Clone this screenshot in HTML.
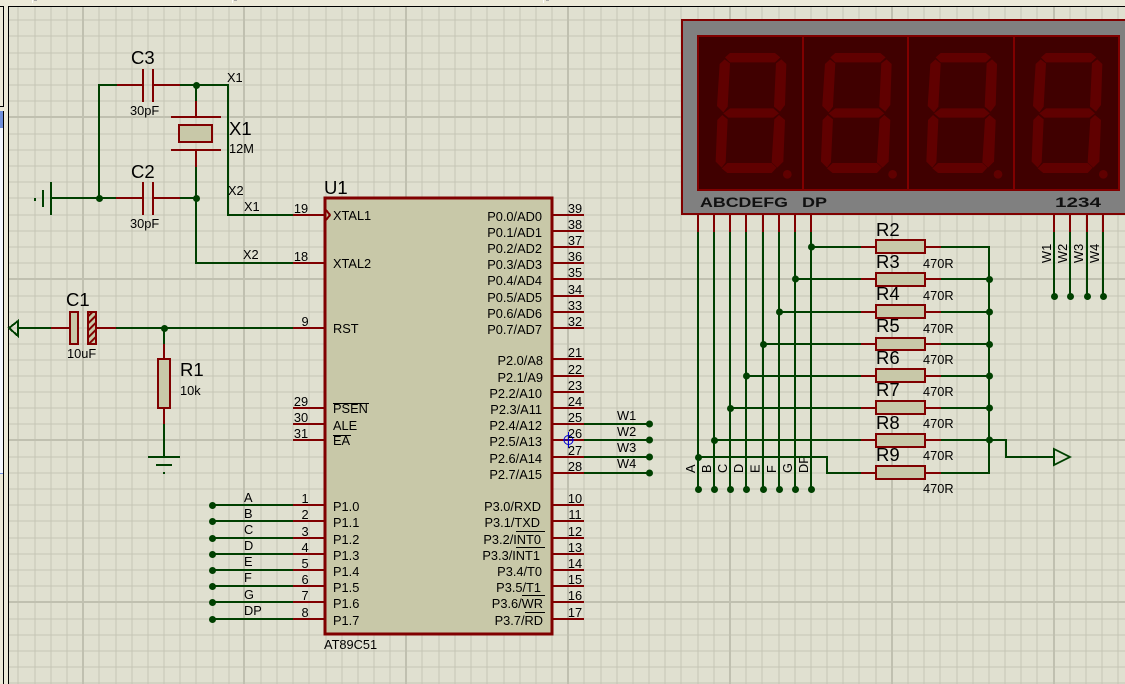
<!DOCTYPE html>
<html><head><meta charset="utf-8"><title>AT89C51 schematic</title>
<style>
html,body{margin:0;padding:0;width:1125px;height:684px;overflow:hidden;background:#ECE9D8}
svg{display:block;position:absolute;left:0;top:0}
text{font-family:"Liberation Sans",sans-serif;fill:#000;stroke:none}
.l{font-size:18.5px}
.s{font-size:12.8px}
.n{font-size:12.8px}
.e{text-anchor:end}
.m{text-anchor:middle}
.g path,.g rect,.g line,.g polygon,.g polyline,.g circle{shape-rendering:crispEdges}
.d{font-size:14px;font-weight:bold;fill:#111}
</style></head><body>
<svg width="1125" height="684" viewBox="0 0 1125 684" xmlns="http://www.w3.org/2000/svg">
<defs>
<pattern id="hatch" width="5" height="5" patternUnits="userSpaceOnUse" patternTransform="rotate(-45)"><rect width="5" height="5" fill="#C8C8A8"/><rect width="5" height="2" fill="#800000"/></pattern>
<g id="digit" fill="#600000">
<polygon points="165,172 180,159 315,159 331,172 315,187 180,187"/>
<polygon points="334,178 349,192 345,315 330,335 312,320 318,190"/>
<polygon points="164,178 149,192 141,318 160,337 173,320 180,190"/>
<polygon points="160,340 180,325 310,325 327,340 310,353 175,353"/>
<polygon points="157,345 173,358 167,487 155,503 137,485 142,360"/>
<polygon points="327,345 345,360 340,485 322,503 305,487 313,358"/>
<polygon points="155,505 172,489 305,489 320,503 305,519 172,519"/>
<circle cx="352" cy="523" r="13"/>
</g>
</defs>

<!-- window chrome -->
<rect x="0" y="0" width="1125" height="684" fill="#ECE9D8"/>
<rect x="9" y="7" width="1116" height="677" fill="#E0E0D0"/>
<rect x="0" y="111" width="3" height="17" fill="#6F8FDC"/>
<rect x="0" y="128" width="3" height="345" fill="#F4F7FE"/>
<rect x="0" y="473" width="3" height="1" fill="#6F8FDC"/>
<rect x="32" y="0" width="1" height="3" fill="#fff"/>
<rect x="34" y="0" width="3" height="1" fill="#aaa"/>
<rect x="232" y="0" width="1" height="3" fill="#fff"/>
<rect x="234" y="0" width="3" height="1" fill="#aaa"/>
<rect x="543" y="0" width="1" height="3" fill="#fff"/>
<rect x="546" y="0" width="3" height="1" fill="#aaa"/>

<g class="g">
<!-- grid minor -->
<path fill="none" stroke="#C6C6B6" stroke-width="1" d="M18 7V684M35 7V684M51 7V684M67 7V684M99 7V684M116 7V684M132 7V684M148 7V684M164 7V684M180 7V684M196 7V684M213 7V684M229 7V684M261 7V684M277 7V684M293 7V684M309 7V684M326 7V684M342 7V684M358 7V684M374 7V684M390 7V684M422 7V684M439 7V684M455 7V684M471 7V684M487 7V684M504 7V684M520 7V684M536 7V684M552 7V684M584 7V684M601 7V684M617 7V684M633 7V684M649 7V684M665 7V684M681 7V684M698 7V684M714 7V684M746 7V684M762 7V684M779 7V684M795 7V684M811 7V684M827 7V684M843 7V684M859 7V684M876 7V684M908 7V684M924 7V684M940 7V684M957 7V684M973 7V684M989 7V684M1005 7V684M1021 7V684M1037 7V684M1070 7V684M1086 7V684M1102 7V684M1118 7V684
M9 20H1125M9 36H1125M9 53H1125M9 69H1125M9 85H1125M9 101H1125M9 134H1125M9 150H1125M9 166H1125M9 182H1125M9 198H1125M9 215H1125M9 231H1125M9 247H1125M9 263H1125M9 296H1125M9 312H1125M9 328H1125M9 344H1125M9 360H1125M9 376H1125M9 392H1125M9 408H1125M9 424H1125M9 457H1125M9 473H1125M9 489H1125M9 505H1125M9 521H1125M9 538H1125M9 554H1125M9 570H1125M9 586H1125M9 619H1125M9 635H1125M9 651H1125M9 667H1125M9 683H1125"/>
<path fill="none" stroke="#C0C0B0" stroke-width="2" d="M83 7V684M244 7V684M406 7V684M568 7V684M730 7V684M892 7V684M1054 7V684M9 117H1125M9 279H1125M9 440H1125M9 602H1125"/>
<!-- frame -->
<path fill="none" stroke="#000" stroke-width="1" d="M8.5 684V6.5H1125"/>
<path fill="none" stroke="#000" stroke-width="1" d="M0 6.5H3.5V106.5H0"/>
<path fill="none" stroke="#000" stroke-width="1" d="M3.5 111V684"/>

<!-- display -->
<rect x="682" y="20" width="460" height="194" fill="#808080" stroke="#800000" stroke-width="2"/>
<rect x="698" y="36" width="421" height="154" fill="#400000" stroke="#800000" stroke-width="2"/>
<path fill="none" stroke="#800000" stroke-width="2" d="M803 36V190M908 36V190M1014 36V190"/>
<g shape-rendering="auto">
<use href="#digit" transform="translate(670 0) scale(.3333)"/>
<use href="#digit" transform="translate(775.3 0) scale(.3333)"/>
<use href="#digit" transform="translate(880.7 0) scale(.3333)"/>
<use href="#digit" transform="translate(986 0) scale(.3333)"/>
</g>
</g>
<text class="d" x="700" y="207" textLength="88" lengthAdjust="spacingAndGlyphs">ABCDEFG</text>
<text class="d" x="802" y="207" textLength="25" lengthAdjust="spacingAndGlyphs">DP</text>
<text class="d" x="1055" y="207" textLength="46" lengthAdjust="spacingAndGlyphs">1234</text>

<!-- rotated labels under wires -->
<g class="s">
<text class="s" transform="translate(695 473) rotate(-90)">A</text>
<text class="s" transform="translate(711 473) rotate(-90)">B</text>
<text class="s" transform="translate(727 473) rotate(-90)">C</text>
<text class="s" transform="translate(743 473) rotate(-90)">D</text>
<text class="s" transform="translate(759.500 473) rotate(-90)">E</text>
<text class="s" transform="translate(776 473) rotate(-90)">F</text>
<text class="s" transform="translate(792 473) rotate(-90)">G</text>
<text class="s" transform="translate(808 473) rotate(-90)">DP</text>
<text class="s" transform="translate(1051 263) rotate(-90)">W1</text>
<text class="s" transform="translate(1067 263) rotate(-90)">W2</text>
<text class="s" transform="translate(1083 263) rotate(-90)">W3</text>
<text class="s" transform="translate(1099 263) rotate(-90)">W4</text>
</g>

<g class="g" fill="none">
<!-- chip -->
<rect x="325" y="198" width="227" height="436" fill="#C8C8A8" stroke="#800000" stroke-width="3"/>

<!-- green wires -->
<path stroke="#004000" stroke-width="2" d="
M117 85H99V198M180 85H228V215H293M196 85V101M196 167V263H293M51 198H116M180 198H196
M19 328H51M116 328H293M164 328V344M164 424V457
M212 505H293M212 521H293M212 538H293M212 554H293M212 570H293M212 586H293M212 602H293M212 619H293
M584 424H649M584 440H649M584 457H649M584 473H649
M698 232V489M714 232V489M730 232V489M746 232V489M763 232V489M779 232V489M795 232V489M811 232V489
M1054 232V296M1070 232V296M1087 232V296M1103 232V296
M811 247H861M795 279H861M779 312H861M763 344H861M746 376H861M730 408H861M714 440H861
M698 457H827V473H861
M941 247H989V473H941M941 279H989M941 312H989M941 344H989M941 376H989M941 408H989M941 440H1006V457H1054"/>
<polygon points="1054,449 1054,465 1070,457" stroke="#004000" stroke-width="2" shape-rendering="auto"/>
<polygon points="9,328 18,321 18,336" stroke="#004000" stroke-width="2" shape-rendering="auto"/>

<!-- ground symbols -->
<path stroke="#004000" stroke-width="2" d="M51 182V215M43 190V207M148 457H180M156 465H172"/>
<rect x="34" y="198" width="2" height="3" fill="#004000"/>
<rect x="163" y="472" width="2" height="2" fill="#004000"/>

<!-- red pins -->
<path stroke="#800000" stroke-width="2" d="
M117 85H143M153 85H180M143 69V102M153 69V102
M116 198H143M153 198H180M143 182V215M153 182V215
M196 101V117M196 150V167M171 117H221M171 150H221
M51 328H70M96 328H116M164 344V359M164 408V424
M293 215H325M293 263H325M293 328H325M293 408H325M293 424H325M293 440H325
M293 505H325M293 521H325M293 538H325M293 554H325M293 570H325M293 586H325M293 602H325M293 619H325
M552 215H584M552 231H584M552 247H584M552 263H584M552 279H584M552 296H584M552 312H584M552 328H584
M552 359H584M552 376H584M552 392H584M552 408H584M552 424H584M552 440H584M552 457H584M552 473H584
M552 505H584M552 521H584M552 538H584M552 554H584M552 570H584M552 586H584M552 602H584M552 619H584
M698 214V232M714 214V232M730 214V232M746 214V232M763 214V232M779 214V232M795 214V232M811 214V232
M1054 214V232M1070 214V232M1087 214V232M1103 214V232
M861 247H876M861 279H876M861 312H876M861 344H876M861 376H876M861 408H876M861 440H876M861 473H876
M925 247H941M925 279H941M925 312H941M925 344H941M925 376H941M925 408H941M925 440H941M925 473H941"/>
<polyline points="326,210 330,215 326,220" stroke="#800000" stroke-width="2" shape-rendering="auto"/>

<!-- parts -->
<rect x="179" y="125" width="33" height="17" fill="#C8C8A8" stroke="#800000" stroke-width="2"/>
<rect x="70" y="312" width="8" height="32" fill="#C8C8A8" stroke="#800000" stroke-width="2"/>
<rect x="88" y="312" width="8" height="32" fill="url(#hatch)" stroke="#800000" stroke-width="2"/>
<rect x="158" y="359" width="12" height="49" fill="#C8C8A8" stroke="#800000" stroke-width="2"/>
<g fill="#C8C8A8" stroke="#800000" stroke-width="2">
<rect x="876" y="240" width="49" height="13"/>
<rect x="876" y="273" width="49" height="13"/>
<rect x="876" y="305" width="49" height="13"/>
<rect x="876" y="338" width="49" height="12"/>
<rect x="876" y="369" width="49" height="13"/>
<rect x="876" y="401" width="49" height="13"/>
<rect x="876" y="434" width="49" height="13"/>
<rect x="876" y="466" width="49" height="13"/>
</g>
</g>

<!-- junctions -->
<g fill="#004000">
<circle cx="196.500" cy="85.500" r="3.500"/><circle cx="99.500" cy="198.500" r="3.500"/><circle cx="196.500" cy="198.500" r="3.500"/><circle cx="164.500" cy="328.500" r="3.500"/>
<circle cx="212.500" cy="505.500" r="3.500"/><circle cx="212.500" cy="521.500" r="3.500"/><circle cx="212.500" cy="538.500" r="3.500"/><circle cx="212.500" cy="554.500" r="3.500"/><circle cx="212.500" cy="570.500" r="3.500"/><circle cx="212.500" cy="586.500" r="3.500"/><circle cx="212.500" cy="602.500" r="3.500"/><circle cx="212.500" cy="619.500" r="3.500"/>
<circle cx="649.500" cy="424" r="3.500"/><circle cx="649.500" cy="440" r="3.500"/><circle cx="649.500" cy="457" r="3.500"/><circle cx="649.500" cy="473" r="3.500"/>
<circle cx="698.500" cy="489.500" r="3.500"/><circle cx="714.500" cy="489.500" r="3.500"/><circle cx="730.500" cy="489.500" r="3.500"/><circle cx="746.500" cy="489.500" r="3.500"/><circle cx="763.500" cy="489.500" r="3.500"/><circle cx="779.500" cy="489.500" r="3.500"/><circle cx="795.500" cy="489.500" r="3.500"/><circle cx="811.500" cy="489.500" r="3.500"/>
<circle cx="1054.500" cy="296.500" r="3.500"/><circle cx="1070.500" cy="296.500" r="3.500"/><circle cx="1087.500" cy="296.500" r="3.500"/><circle cx="1103.500" cy="296.500" r="3.500"/>
<circle cx="811.500" cy="247" r="3.500"/><circle cx="795.500" cy="279" r="3.500"/><circle cx="779.500" cy="312" r="3.500"/><circle cx="763.500" cy="344.500" r="3.500"/><circle cx="746.500" cy="376" r="3.500"/><circle cx="730.500" cy="408.500" r="3.500"/><circle cx="714.500" cy="440.500" r="3.500"/><circle cx="698.500" cy="457.500" r="3.500"/>
<circle cx="989.500" cy="279.500" r="3.500"/><circle cx="989.500" cy="312" r="3.500"/><circle cx="989.500" cy="344.500" r="3.500"/><circle cx="989.500" cy="376" r="3.500"/><circle cx="989.500" cy="408" r="3.500"/><circle cx="989.500" cy="440" r="3.500"/>
</g>

<!-- crosshair -->
<g fill="none" stroke="#0000D0" stroke-width="1"><circle cx="568.500" cy="440" r="4.500"/><path d="M568.500 432V448M563 440H574"/></g>

<!-- big labels -->
<text class="l" x="131" y="64">C3</text>
<text class="l" x="131" y="178">C2</text>
<text class="l" x="229" y="135">X1</text>
<text class="l" x="324" y="194">U1</text>
<text class="l" x="66" y="306">C1</text>
<text class="l" x="180" y="376">R1</text>
<text class="l" x="876" y="236">R2</text>
<text class="l" x="876" y="268">R3</text>
<text class="l" x="876" y="300">R4</text>
<text class="l" x="876" y="332">R5</text>
<text class="l" x="876" y="364">R6</text>
<text class="l" x="876" y="396">R7</text>
<text class="l" x="876" y="429">R8</text>
<text class="l" x="876" y="461">R9</text>

<!-- small labels -->
<g class="s">
<text class="s" x="130" y="115">30pF</text>
<text class="s" x="130" y="228">30pF</text>
<text class="s" x="229" y="153">12M</text>
<text class="s" x="67" y="358">10uF</text>
<text class="s" x="180" y="395">10k</text>
<text class="s" x="227" y="82">X1</text>
<text class="s" x="228" y="195">X2</text>
<text class="s" x="244" y="211">X1</text>
<text class="s" x="243" y="259">X2</text>
<text class="s" x="324" y="649">AT89C51</text>
<text class="s" x="333" y="220">XTAL1</text>
<text class="s" x="333" y="268">XTAL2</text>
<text class="s" x="333" y="333">RST</text>
<text class="s" x="333" y="413">PSEN</text>
<text class="s" x="333" y="430">ALE</text>
<text class="s" x="333" y="445">EA</text>
<text class="s" x="333" y="511">P1.0</text>
<text class="s" x="333" y="527">P1.1</text>
<text class="s" x="333" y="544">P1.2</text>
<text class="s" x="333" y="560">P1.3</text>
<text class="s" x="333" y="576">P1.4</text>
<text class="s" x="333" y="592">P1.5</text>
<text class="s" x="333" y="608">P1.6</text>
<text class="s" x="333" y="625">P1.7</text>
<text class="s" x="244" y="502">A</text>
<text class="s" x="244" y="518">B</text>
<text class="s" x="244" y="534">C</text>
<text class="s" x="244" y="550">D</text>
<text class="s" x="244" y="566">E</text>
<text class="s" x="244" y="582">F</text>
<text class="s" x="244" y="599">G</text>
<text class="s" x="244" y="615">DP</text>
<text class="s" x="617" y="420">W1</text>
<text class="s" x="617" y="436">W2</text>
<text class="s" x="617" y="452">W3</text>
<text class="s" x="617" y="468">W4</text>
<text class="s" x="923" y="268">470R</text>
<text class="s" x="923" y="300">470R</text>
<text class="s" x="923" y="333">470R</text>
<text class="s" x="923" y="364">470R</text>
<text class="s" x="923" y="396">470R</text>
<text class="s" x="923" y="428">470R</text>
<text class="s" x="923" y="460">470R</text>
<text class="s" x="923" y="493">470R</text>
</g>
<g>
<text class="s e" x="542" y="221">P0.0/AD0</text>
<text class="s e" x="542" y="237">P0.1/AD1</text>
<text class="s e" x="542" y="253">P0.2/AD2</text>
<text class="s e" x="542" y="269">P0.3/AD3</text>
<text class="s e" x="542" y="285">P0.4/AD4</text>
<text class="s e" x="542" y="302">P0.5/AD5</text>
<text class="s e" x="542" y="318">P0.6/AD6</text>
<text class="s e" x="542" y="334">P0.7/AD7</text>
<text class="s e" x="543" y="365">P2.0/A8</text>
<text class="s e" x="543" y="382">P2.1/A9</text>
<text class="s e" x="542" y="398">P2.2/A10</text>
<text class="s e" x="542" y="414">P2.3/A11</text>
<text class="s e" x="542" y="430">P2.4/A12</text>
<text class="s e" x="542" y="446">P2.5/A13</text>
<text class="s e" x="542" y="463">P2.6/A14</text>
<text class="s e" x="542" y="479">P2.7/A15</text>
<text class="s e" x="541" y="511">P3.0/RXD</text>
<text class="s e" x="540" y="527">P3.1/TXD</text>
<text class="s e" x="541" y="544">P3.2/INT0</text>
<text class="s e" x="540" y="560">P3.3/INT1</text>
<text class="s e" x="542" y="576">P3.4/T0</text>
<text class="s e" x="541" y="592">P3.5/T1</text>
<text class="s e" x="543" y="608">P3.6/WR</text>
<text class="s e" x="543" y="625">P3.7/RD</text>
</g>
<path shape-rendering="crispEdges" fill="none" stroke="#000" stroke-width="1" d="M333 403.500H369M333 435.500H351M516 531.500H545M516 547.500H545M522 595.500H545M525 612.500H545"/>

<!-- pin numbers -->
<g>
<text class="n m" x="575" y="213">39</text><text class="n m" x="575" y="229">38</text><text class="n m" x="575" y="245">37</text><text class="n m" x="575" y="261">36</text><text class="n m" x="575" y="277">35</text><text class="n m" x="575" y="294">34</text><text class="n m" x="575" y="310">33</text><text class="n m" x="575" y="326">32</text>
<text class="n m" x="575" y="357">21</text><text class="n m" x="575" y="374">22</text><text class="n m" x="575" y="390">23</text><text class="n m" x="575" y="406">24</text><text class="n m" x="575" y="422">25</text><text class="n m" x="575" y="438">26</text><text class="n m" x="575" y="455">27</text><text class="n m" x="575" y="471">28</text>
<text class="n m" x="575" y="503">10</text><text class="n m" x="575" y="519">11</text><text class="n m" x="575" y="536">12</text><text class="n m" x="575" y="552">13</text><text class="n m" x="575" y="568">14</text><text class="n m" x="575" y="584">15</text><text class="n m" x="575" y="600">16</text><text class="n m" x="575" y="617">17</text>
<text class="n m" x="305" y="503">1</text><text class="n m" x="305" y="519">2</text><text class="n m" x="305" y="536">3</text><text class="n m" x="305" y="552">4</text><text class="n m" x="305" y="568">5</text><text class="n m" x="305" y="584">6</text><text class="n m" x="305" y="600">7</text><text class="n m" x="305" y="617">8</text>
<text class="n m" x="301" y="213">19</text><text class="n m" x="301" y="261">18</text><text class="n m" x="305" y="326">9</text><text class="n m" x="301" y="406">29</text><text class="n m" x="301" y="422">30</text><text class="n m" x="301" y="438">31</text>
</g>
</svg>
</body></html>
